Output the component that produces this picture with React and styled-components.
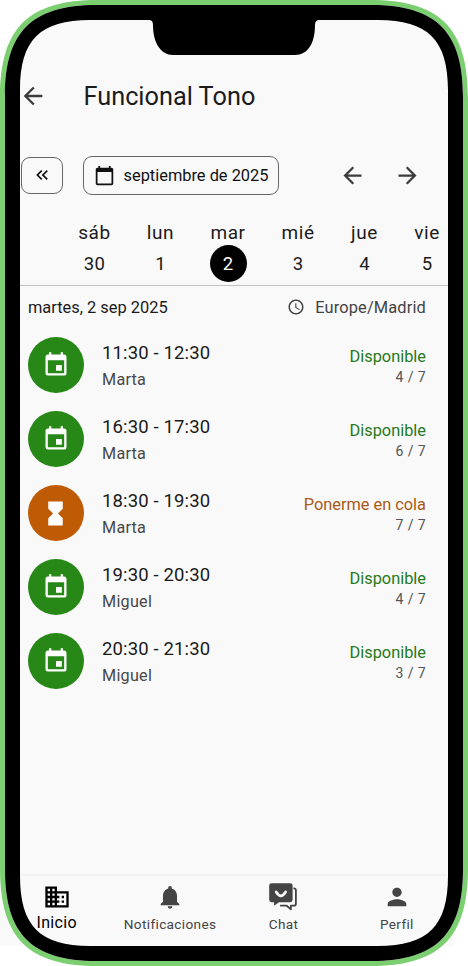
import React from 'react';
import styled, { createGlobalStyle } from 'styled-components';
import {
  MdArrowBack, MdArrowForward, MdKeyboardDoubleArrowLeft, MdCalendarToday, MdEvent,
  MdHourglassFull, MdAccessTime, MdDomain, MdNotifications, MdPerson,
} from 'react-icons/md';

const Global = createGlobalStyle`
  * { box-sizing: border-box; }
  body { margin: 0; background: #fff; }
`;

const Device = styled.div`
  position: relative;
  width: 468px;
  height: 966px;
  padding: 20px;
  overflow: hidden;
  font-family: Roboto, sans-serif;
  color: #1b1b1b;
  background: linear-gradient(#f9f9f9, #f9f9f9) 0 846px / 454px 100px no-repeat;
`;

const Bezel = styled.svg`
  position: absolute;
  inset: 0;
  pointer-events: none;
`;

const Screen = styled.main`
  display: flex;
  flex-direction: column;
  width: 428px;
  height: 926px;
  background: #f9f9f9;
  overflow: hidden;
`;

const TopBar = styled.header`
  display: flex;
  flex: none;
  align-items: center;
  height: 56px;
  margin-top: 48px;
  svg { flex: none; width: 28px; height: 28px; margin-left: -1.5px; color: #3c3c3c; }
`;

const Title = styled.h1`
  margin: 0 0 0 37px;
  padding-top: 2px;
  font-size: 25.3px;
  font-weight: 400;
  line-height: 32px;
  white-space: nowrap;
`;

const Toolbar = styled.div`
  display: flex;
  flex: none;
  align-items: center;
  height: 40px;
  margin-top: 31px;
  padding-left: 1px;
`;

const OutlineButton = styled.button`
  display: flex;
  flex: none;
  align-items: center;
  justify-content: center;
  width: ${p => p.$width}px;
  height: ${p => p.$height}px;
  margin: 0 ${p => p.$after}px 0 0;
  padding: 0;
  gap: 9px;
  border: 1px solid #666;
  border-radius: 9px;
  background: transparent;
  color: #111;
  font: 400 16.4px/20px Roboto, sans-serif;
  white-space: nowrap;
  svg { flex: none; }
`;

const MonthLabel = styled.span`
  padding-top: 1px;
`;

const ArrowButton = styled.button`
  display: flex;
  align-items: center;
  justify-content: center;
  width: 55px;
  height: 40px;
  padding: 0;
  border: 0;
  background: none;
  color: #3c3c3c;
`;

const Week = styled.div`
  display: flex;
  height: 79px;
  margin-top: 12px;
  padding-left: 41px;
  border-bottom: 1px solid #c1c1c1;
  flex: none;
`;

const Day = styled.div`
  display: flex;
  flex: none;
  flex-direction: column;
  align-items: center;
  width: ${p => p.$width}px;
  padding-top: 14px;
  font-size: 19px;
  line-height: 24px;
  letter-spacing: 0.6px;
`;

const DayNumber = styled.span`
  display: flex;
  align-items: center;
  justify-content: center;
  width: 37px;
  height: 37px;
  border-radius: 50%;
  font-size: 18.5px;
  letter-spacing: 0.3px;
  background: ${p => (p.$active ? '#000' : 'transparent')};
  color: ${p => (p.$active ? '#fff' : '#1b1b1b')};
`;

const DateRow = styled.div`
  display: flex;
  align-items: center;
  justify-content: space-between;
  height: 42px;
  padding: 0 22px 0 8px;
  font-size: 16.4px;
  flex: none;
`;

const Zone = styled.span`
  display: flex;
  align-items: center;
  gap: 10px;
  color: #444;
  letter-spacing: 0.15px;
`;

const Session = styled.article`
  display: flex;
  align-items: center;
  height: 74px;
  padding: 0 22px 0 8px;
  flex: none;
`;

const StatusDisc = styled.div`
  display: flex;
  align-items: center;
  justify-content: center;
  width: 55.5px;
  height: 56px;
  border-radius: 50%;
  background: ${p => (p.$queue ? '#bf5b04' : '#278717')};
  color: #fff;
`;

const Details = styled.div`
  flex: 1;
  margin-left: 18.5px;
  padding-top: 2px;
`;

const Hours = styled.div`
  font-size: 18.5px;
  line-height: 26px;
  letter-spacing: 0.14px;
`;

const Coach = styled.div`
  padding-top: 1px;
  margin-bottom: -1px;
  font-size: 16.2px;
  line-height: 26px;
  letter-spacing: 0.25px;
  color: #484848;
`;

const Availability = styled.div`
  padding-top: 2px;
  text-align: right;
  font-size: 16.35px;
  line-height: 22px;
  color: ${p => (p.$queue ? '#aa5a16' : '#277a1b')};
`;

const Places = styled.div`
  font-size: 14px;
  line-height: 19px;
  letter-spacing: 0.4px;
  color: #555;
`;

const Navigation = styled.nav`
  display: grid;
  flex: none;
  grid-template-columns: repeat(4, 113.4px);
  height: 72px;
  margin: auto 0 0 -20px;
  border-top: 2px solid #f3f3f3;
`;

const NavItem = styled.div`
  display: flex;
  flex-direction: column;
  align-items: center;
  padding-top: 7px;
  font-size: ${p => (p.$active ? 16 : 13.6)}px;
  line-height: 24px;
  letter-spacing: ${p => (p.$active ? 0.3 : 0.35)}px;
  color: ${p => (p.$active ? '#000' : '#444')};
`;

const IconSlot = styled.span`
  display: flex;
  align-items: center;
  justify-content: center;
  height: 28px;
  margin-bottom: ${p => (p.$active ? 0 : 1)}px;
`;

const days = [
  ['sáb', 30, 67], ['lun', 1, 65], ['mar', 2, 70], ['mié', 3, 70], ['jue', 4, 63], ['vie', 5, 62],
];

const sessions = [
  ['11:30 - 12:30', 'Marta', 4],
  ['16:30 - 17:30', 'Marta', 6],
  ['18:30 - 19:30', 'Marta', 7],
  ['19:30 - 20:30', 'Miguel', 4],
  ['20:30 - 21:30', 'Miguel', 3],
];

const ChatIcon = () => (
  <svg width="28" height="28" viewBox="0 0 28 28">
    <path d="M24.400 5.300h.5a2 2 0 0 1 2 2v13.400a2 2 0 0 1-2 2h-3v3.600l-4.200-3.600h-6.600" fill="none" stroke="#444" strokeWidth="1.800" strokeLinejoin="round" />
    <path d="M2.600.2h18.600a2.400 2.400 0 0 1 2.400 2.400v14.200a2.400 2.400 0 0 1-2.400 2.400H10L5.100 22.800v-3.600H2.600A2.400 2.400 0 0 1 .2 16.800V2.600A2.400 2.400 0 0 1 2.600.2z" fill="#444" />
    <path d="M7.200 9q4.700 7.600 9.400 0" fill="none" stroke="#f9f9f9" strokeWidth="2.700" strokeLinecap="round" />
  </svg>
);

const outer = 'M98 0H370C440 0 468 28 468 98V868C468 938 440 966 370 966H98C28 966 0 938 0 868V98C0 28 28 0 98 0Z';
const body = 'M96 5H372C436 5 463 32 463 96V870C463 934 436 961 372 961H96C32 961 5 934 5 870V96C5 32 32 5 96 5Z';
const opening = 'M90 20H149Q153 20 153 25C153 43 161 55 173 55H295C308 55 315 43 315 25Q315 20 319 20H378C428 20 448 40 448 90V876C448 926 428 946 378 946H90C40 946 20 926 20 876V90C20 40 40 20 90 20Z';

export default function App() {
  return (
    <>
      <Global />
      <Device>
        <Screen>
          <TopBar><MdArrowBack /><Title>Funcional Tono</Title></TopBar>
          <Toolbar>
            <OutlineButton $width={42} $height={37} $after={20}><MdKeyboardDoubleArrowLeft size={20} /></OutlineButton>
            <OutlineButton $width={196} $height={39} $after={45.5}><MdCalendarToday size={21} /><MonthLabel>septiembre de 2025</MonthLabel></OutlineButton>
            <ArrowButton><MdArrowBack size={27} /></ArrowButton>
            <ArrowButton><MdArrowForward size={27} /></ArrowButton>
          </Toolbar>
          <Week>
            {days.map(([name, number, width]) => (
              <Day key={name} $width={width}>{name}<DayNumber $active={number === 2}>{number}</DayNumber></Day>
            ))}
          </Week>
          <DateRow>
            <span>martes, 2 sep 2025</span>
            <Zone><MdAccessTime size={18} />Europe/Madrid</Zone>
          </DateRow>
          {sessions.map(([hours, coach, count]) => (
            <Session key={hours}>
              <StatusDisc $queue={count === 7}>{count === 7 ? <MdHourglassFull size={29} /> : <MdEvent size={28} />}</StatusDisc>
              <Details><Hours>{hours}</Hours><Coach>{coach}</Coach></Details>
              <Availability $queue={count === 7}>
                {count === 7 ? 'Ponerme en cola' : 'Disponible'}
                <Places>{count} / 7</Places>
              </Availability>
            </Session>
          ))}
          <Navigation>
            <NavItem $active><IconSlot $active><MdDomain size={28} /></IconSlot>Inicio</NavItem>
            <NavItem><IconSlot><MdNotifications size={28} /></IconSlot>Notificaciones</NavItem>
            <NavItem><IconSlot><ChatIcon /></IconSlot>Chat</NavItem>
            <NavItem><IconSlot><MdPerson size={28} /></IconSlot>Perfil</NavItem>
          </Navigation>
        </Screen>
        <Bezel width="468" height="966" viewBox="0 0 468 966" aria-hidden="true">
          <path d={`${outer}${body}`} fill="#7bcf70" fillRule="evenodd" />
          <path d={`${body}${opening}`} fill="#000" fillRule="evenodd" />
        </Bezel>
      </Device>
    </>
  );
}
